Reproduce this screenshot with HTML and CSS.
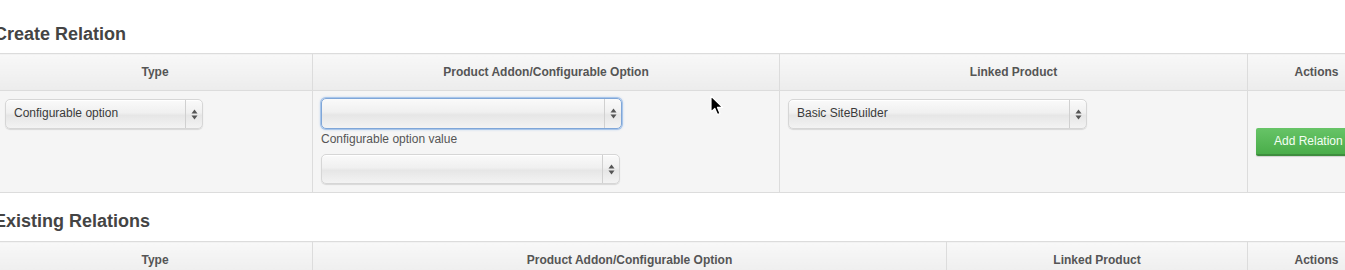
FILE: index.html
```html
<!DOCTYPE html>
<html>
<head>
<meta charset="utf-8">
<link rel="stylesheet" href="styles.css">
</head>
<body>
<div class="page">
  <h3 class="title">Create Relation</h3>
  <table class="grid create">
    <colgroup>
      <col class="c-type"><col class="c-addon"><col class="c-linked"><col class="c-actions">
    </colgroup>
    <thead>
      <tr><th>Type</th><th>Product Addon/Configurable Option</th><th>Linked Product</th><th>Actions</th></tr>
    </thead>
    <tbody>
      <tr>
        <td>
          <div class="select w-type"><span class="select-text">Configurable option</span><span class="select-arrow"><svg width="7" height="11" viewBox="0 0 7 11"><path d="M3.5 0.5 L6.5 4.5 H0.5 Z M3.5 10.5 L6.5 6.5 H0.5 Z" fill="#555"/></svg></span></div>
        </td>
        <td>
          <div class="select w-addon focus"><span class="select-text"></span><span class="select-arrow"><svg width="7" height="11" viewBox="0 0 7 11"><path d="M3.5 0.5 L6.5 4.5 H0.5 Z M3.5 10.5 L6.5 6.5 H0.5 Z" fill="#555"/></svg></span></div>
          <label class="field-label">Configurable option value</label>
          <div class="select w-addon2"><span class="select-text"></span><span class="select-arrow"><svg width="7" height="11" viewBox="0 0 7 11"><path d="M3.5 0.5 L6.5 4.5 H0.5 Z M3.5 10.5 L6.5 6.5 H0.5 Z" fill="#555"/></svg></span></div>
        </td>
        <td>
          <div class="select w-linked"><span class="select-text">Basic SiteBuilder</span><span class="select-arrow"><svg width="7" height="11" viewBox="0 0 7 11"><path d="M3.5 0.5 L6.5 4.5 H0.5 Z M3.5 10.5 L6.5 6.5 H0.5 Z" fill="#555"/></svg></span></div>
        </td>
        <td class="action-cell">
          <button class="btn-success">Add Relation</button>
        </td>
      </tr>
    </tbody>
  </table>

  <h3 class="title second">Existing Relations</h3>
  <table class="grid existing">
    <colgroup>
      <col class="e-type"><col class="e-addon"><col class="e-linked"><col class="e-actions">
    </colgroup>
    <thead>
      <tr><th>Type</th><th>Product Addon/Configurable Option</th><th>Linked Product</th><th>Actions</th></tr>
    </thead>
  </table>
</div>
<svg class="cursor" width="14" height="22" viewBox="0 0 14 22">
  <path d="M1 1 L1 17 L4.8 13.4 L7.4 19.6 L10 18.5 L7.5 12.4 L12.6 12.4 Z" fill="#000" stroke="#fff" stroke-width="1.2" stroke-linejoin="round"/>
</svg>
</body>
</html>
```
FILE: styles.css
```css
html, body {
  margin: 0;
  padding: 0;
  background: #fff;
  overflow: hidden;
}
body {
  font-family: "Liberation Sans", Arial, sans-serif;
  font-size: 12px;
  color: #555;
  width: 1345px;
  height: 270px;
  position: relative;
}
.page {
  margin-left: -3px;
  width: 1400px;
}
.title {
  margin: 24px 0 9px -3px;
  font-size: 18px;
  line-height: 20px;
  font-weight: bold;
  color: #444;
}
.title.second {
  margin-top: 18px;
  margin-bottom: 10px;
}
.grid {
  border-collapse: collapse;
  table-layout: fixed;
  width: 1388px;
  background: #f5f5f5;
}
.grid th, .grid td {
  border: 1px solid #dcdcdc;
}
.grid th {
  height: 36px;
  padding: 0 8px;
  font-weight: bold;
  font-size: 12px;
  color: #555;
  text-align: center;
  vertical-align: middle;
  background: linear-gradient(#f8f8f8, #ececec);
}
.grid td {
  padding: 8px;
  vertical-align: top;
}
.grid td.action-cell {
  vertical-align: middle;
  padding-top: 0;
  padding-bottom: 0;
}
.c-type { width: 315px; }
.c-addon { width: 467px; }
.c-linked { width: 468px; }
.c-actions { width: 138px; }
.e-type { width: 315px; }
.e-addon { width: 634px; }
.e-linked { width: 301px; }
.e-actions { width: 138px; }

.select {
  display: flex;
  align-items: stretch;
  height: 30px;
  box-sizing: border-box;
  border-radius: 5px;
  border: 1px solid #d6d6d6;
  background: linear-gradient(#fafafa 0%, #f0f0f0 45%, #e6e6e6 55%, #f3f3f3 100%);
  box-shadow: 0 1px 1px rgba(0,0,0,0.12), inset 0 1px 0 #fff;
  color: #333;
}
.select-text {
  flex: 1;
  padding-left: 8px;
  line-height: 27px;
  font-size: 12px;
  color: #3a3a3a;
}
.select-arrow {
  width: 16px;
  border-left: 1px solid #d0d0d0;
  display: flex;
  align-items: center;
  justify-content: center;
}
.w-type { width: 198px; margin-left: -1px; }
.w-addon { width: 301px; margin-top: -1px; }
.w-addon2 { width: 299px; }
.w-linked { width: 299px; }
.select.focus {
  border: 1px solid #7fa6d8;
  box-shadow: 0 0 0 1px #a9c6ea, 0 0 3px #8cb2e6;
  height: 31px;
}
.field-label {
  display: block;
  margin: 2px 0 7px 0;
  line-height: 16px;
  font-size: 12px;
  color: #555;
}
.btn-success {
  display: block;
  height: 28px;
  padding: 0 18px;
  margin-left: 0;
  border: 0;
  border-bottom: 2px solid #3e8d3e;
  border-radius: 2px;
  background: linear-gradient(#67c467, #4aad4a);
  color: #f4fff4;
  font-family: "Liberation Sans", Arial, sans-serif;
  font-size: 12px;
  line-height: 26px;
  white-space: nowrap;
  box-shadow: 0 1px 1px rgba(0,0,0,0.15);
}
.cursor {
  position: absolute;
  left: 710px;
  top: 95px;
}
```
